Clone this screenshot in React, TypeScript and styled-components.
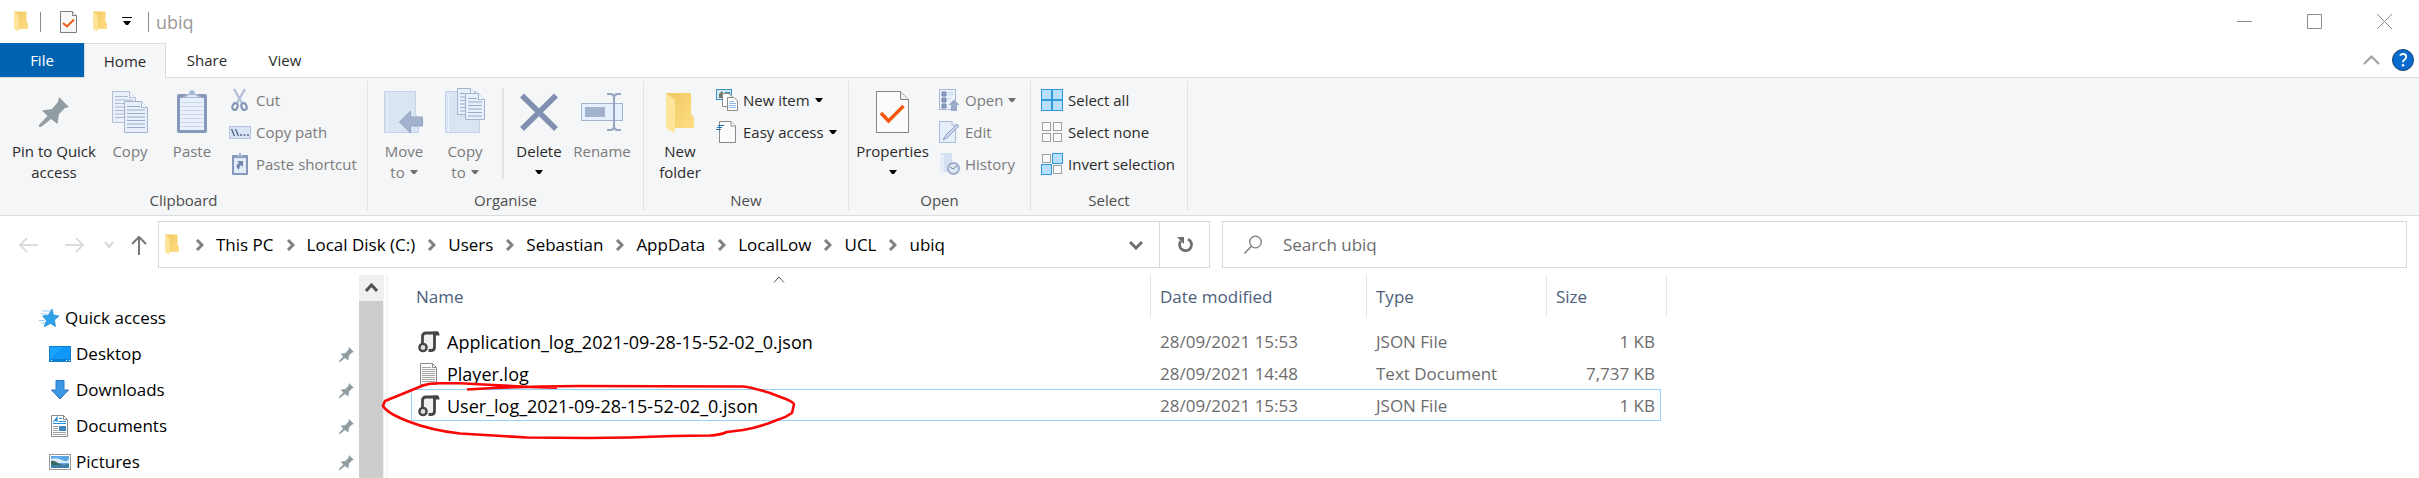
import React from "react";
import styled, { createGlobalStyle, css } from "styled-components";

const GlobalStyle = createGlobalStyle`
  *, *::before, *::after { box-sizing: border-box; }
  body {
    margin: 0;
    background: #fff;
    color: #000;
    font-family: "Open Sans", "Noto Sans", sans-serif;
    font-size: 17px;
    line-height: 24px;
  }
  button, input {
    font: inherit;
    color: inherit;
    background: none;
    border: 0;
    padding: 0;
    margin: 0;
  }
  svg { display: block; flex: none; }
`;

/* ---------- layout ---------- */

const Window = styled.div`
  display: flex;
  flex-direction: column;
  height: 100vh;
  overflow: hidden;
`;

const TitleBar = styled.header`
  display: flex;
  align-items: center;
  height: 43px;
  padding-left: 14px;
`;

const QuickTools = styled.div`
  display: flex;
  align-items: center;
  gap: 15px;
  margin: 0 16px 0 19px;
`;

const ToolButton = styled.button`
  display: flex;
  align-items: center;
  justify-content: center;
`;

const BarLine = styled.span<{ $gap?: number }>`
  width: 1px;
  height: 20px;
  margin-left: ${(p) => p.$gap ?? 0}px;
  background: #8c8c8c;
`;

const Title = styled.h1`
  margin: 0 0 0 7px;
  font-size: 18px;
  font-weight: 400;
  color: #999;
`;

const WindowControls = styled.div`
  display: flex;
  margin-left: auto;
`;

const ControlButton = styled.button`
  display: flex;
  align-items: center;
  justify-content: center;
  width: 70px;
  height: 42px;
`;

const TabBar = styled.nav`
  display: flex;
  height: 35px;
  font-size: 15px;
  border-bottom: 1px solid #dadbdc;
  color: #2b2b2b;
`;

const Tab = styled.button<{ $width: number; $kind?: "file" | "active" }>`
  width: ${(p) => p.$width}px;
  height: 34px;
  ${(p) =>
    p.$kind === "file" &&
    css`
      background: #0063b1;
      color: #fff;
    `}
  ${(p) =>
    p.$kind === "active" &&
    css`
      height: 35px;
      background: #f5f6f7;
      border: 1px solid #dadbdc;
      border-bottom: 0;
    `}
`;

const TabBarEnd = styled.div`
  display: flex;
  align-items: center;
  gap: 12px;
  margin-left: auto;
  padding-right: 5px;
`;

const Ribbon = styled.div`
  display: flex;
  flex: none;
  height: 138px;
  padding: 3px 0 4px;
  background: #f5f6f7;
  border-bottom: 1px solid #dadbdc;
  font-size: 15px;
  line-height: 21px;
`;

const Group = styled.section<{ $width: number }>`
  display: flex;
  flex-direction: column;
  min-width: ${(p) => p.$width}px;
  border-right: 1px solid #e2e3e4;
`;

const GroupBody = styled.div<{ $pad: number }>`
  display: flex;
  flex: 1;
  padding: 3px 0 0 ${(p) => p.$pad}px;
`;

const GroupLabel = styled.h2`
  margin: 0;
  text-align: center;
  font-size: 15px;
  font-weight: 400;
  color: #4d4d4d;
`;

const LargeButton = styled.button<{ $width: number }>`
  display: flex;
  flex-direction: column;
  align-items: center;
  width: ${(p) => p.$width}px;
  height: 100px;
  padding-top: 4px;
  color: #2b2b2b;
  &:disabled { color: #7b7b7b; }
  svg + span { margin-top: 7px; }
`;

const LabelLine = styled.span`
  display: flex;
  align-items: center;
  justify-content: center;
  gap: 5px;
  min-height: 21px;
  white-space: nowrap;
`;

const SmallColumn = styled.div<{ $gap: number }>`
  display: flex;
  flex-direction: column;
  align-items: flex-start;
  margin-left: ${(p) => p.$gap}px;
`;

const SmallButton = styled.button`
  display: flex;
  align-items: center;
  gap: 5px;
  height: 32px;
  color: #2b2b2b;
  white-space: nowrap;
  &:disabled { color: #7b7b7b; }
`;

const GroupDivider = styled.span`
  width: 2px;
  height: 91px;
  margin: 4px 4px 0 6px;
  background: #e1e2e4;
`;

const NavBar = styled.div`
  display: grid;
  grid-template-columns: 158px 1052fr 1197fr;
  flex: none;
  padding: 5px 12px 7px 0;
`;

const NavButtons = styled.div`
  display: flex;
  padding-left: 5px;
`;

const NavButton = styled.button<{ $width: number }>`
  display: flex;
  align-items: center;
  justify-content: center;
  width: ${(p) => p.$width}px;
  height: 47px;
`;

const AddressBar = styled.div`
  display: flex;
  align-items: center;
  height: 47px;
  padding-left: 6px;
  border: 1px solid #d9d9d9;
`;

const Crumbs = styled.ol`
  display: flex;
  flex: 1;
  margin: 0;
  padding: 0 0 0 4px;
  list-style: none;
`;

const Crumb = styled.li`
  display: flex;
  align-items: center;
  gap: 12px;
  margin-left: 12px;
  white-space: nowrap;
`;

const RefreshButton = styled(NavButton)`
  height: 45px;
  border-left: 1px solid #d9d9d9;
`;

const SearchBox = styled.label`
  display: flex;
  align-items: center;
  gap: 21px;
  margin-left: 12px;
  padding-left: 21px;
  border: 1px solid #d9d9d9;
`;

const SearchInput = styled.input`
  flex: 1;
  outline: 0;
  &::placeholder { color: #6d6d6d; opacity: 1; }
`;

const Content = styled.div`
  display: flex;
  flex: 1;
  min-height: 0;
`;

const Sidebar = styled.aside`
  width: 359px;
  padding: 25px 20px 0 38px;
  overflow: hidden;
`;

const SideLink = styled.a<{ $child?: boolean }>`
  display: flex;
  align-items: center;
  gap: 5px;
  height: 36px;
  padding-left: ${(p) => (p.$child ? 11 : 0)}px;
  color: #000;
  text-decoration: none;
  svg:last-child:not(:first-child) { margin-left: auto; margin-right: -15px; }
`;

const ScrollTrack = styled.div`
  display: flex;
  flex-direction: column;
  width: 25px;
  background: #f0f0f0;
`;

const ScrollUp = styled.button`
  display: flex;
  align-items: center;
  justify-content: center;
  height: 26px;
`;

const ScrollThumb = styled.div`
  flex: 1;
  width: 24px;
  background: #cdcdcd;
`;

const FilePane = styled.main`
  position: relative;
  flex: 1;
  margin-left: 2px;
  padding-left: 23px;
  border-left: 2px solid #f5f5f5;
`;

const FileTable = styled.table`
  width: 1256px;
  table-layout: fixed;
  border-collapse: separate;
  border-spacing: 0;
  tbody::before {
    content: "";
    display: block;
    height: 8px;
  }
`;

const HeadCell = styled.th`
  position: relative;
  height: 42px;
  padding: 2px 0 0 9px;
  border-right: 1px solid #e5e5e5;
  text-align: left;
  font-weight: 400;
  color: #4c607a;
  &:first-child { padding-left: 5px; }
`;

const SortMark = styled.span`
  position: absolute;
  top: 1px;
  left: 362px;
`;

const Cell = styled.td<{ $align?: "right" }>`
  height: 32px;
  padding: 2px 5px 0 9px;
  border: solid transparent;
  border-width: 1px 0;
  text-align: ${(p) => p.$align ?? "left"};
  color: #6d6d6d;
  white-space: nowrap;
  &:first-child {
    padding-left: 6px;
    border-left-width: 1px;
    color: #000;
    font-size: 18px;
  }
  &:last-child { border-right-width: 1px; }
`;

const Row = styled.tr<{ $focused?: boolean }>`
  ${(p) =>
    p.$focused &&
    css`
      ${Cell} { border-color: #99d1ff; }
    `}
`;

const FileName = styled.span`
  display: flex;
  align-items: center;
  gap: 7px;
`;

const Marker = styled.svg`
  position: absolute;
  left: -8px;
  top: 102px;
  pointer-events: none;
`;

/* ---------- icons ---------- */

const Folder = ({ w = 28, h = 42, flat = false }) => (
  <svg width={w} height={h} viewBox={flat ? "0 0 28 42" : "0 -4 28 46"} preserveAspectRatio="none">
    <defs>
      <linearGradient id="fold" x1="0" x2="1" y1="0" y2="1">
        <stop offset="0" stopColor="#f0c964" />
        <stop offset="1" stopColor="#ffdd82" />
      </linearGradient>
    </defs>
    <path d="M0 1H25V22L28 25V36H6Z" fill="url(#fold)" />
    <path d="M0 1L9 8V40L8 41L0 36Z" fill="#ffe59b" />
  </svg>
);

const Caret = ({ color = "#000" }) => (
  <svg width="8" height="5" viewBox="0 0 8 5">
    <path d="M0 0H8L5 4H3Z" fill={color} />
  </svg>
);

const PropSmall = () => (
  <svg width="18" height="22" viewBox="0 0 18 22">
    <path d="M.5 .5H12.5L16.5 4.5V21.5H.5Z" fill="#f7f7f7" stroke="#7d7d7d" />
    <path d="M12.5 .5V4.5H16.5" fill="#fff" stroke="#7d7d7d" />
    <path d="M3 12L7 15.5L14 8.5" fill="none" stroke="#f25a13" strokeWidth="2" />
  </svg>
);

const Customize = () => (
  <svg width="10" height="9" viewBox="0 0 10 9">
    <path d="M0 .5H10" stroke="#000" />
    <path d="M1 4H9L6 8H4Z" />
  </svg>
);

const Pin = ({ size = 30, h = size }) => (
  <svg width={size} height={h} viewBox={h === size ? "0 0 30 30" : "0 -9 30 46"}>
    <path d="M20 0L30 10L26 11L20 17L18.5 27L12 22L2 30H0V28L8.5 19L3 13.5L13 12L19 5Z" fill="#919ca3" />
  </svg>
);

const sheet = (x: number, y: number, w: number, h: number, lines = 7) => (
  <g transform={`translate(${x} ${y})`}>
    <path d={`M.5 .5H${w - 6.5}L${w - 0.5} 6.5V${h - 0.5}H.5Z`} fill="#e8effa" stroke="#a3b3cf" />
    <path d={`M${w - 6.5} .5V6.5H${w - 0.5}`} fill="#f6f9fd" stroke="#a3b3cf" />
    {Array.from({ length: lines }, (_, i) => (
      <path key={i} d={`M3 ${5.5 + i * 3.5}H${i === 0 ? w - 8 : w - 3}`} stroke="#9aabca" />
    ))}
  </g>
);

const CopyIcon = () => (
  <svg width="36" height="46" viewBox="0 0 36 46">
    <g opacity=".8">{sheet(0, 3, 24, 32)}</g>
    {sheet(12, 13, 24, 32)}
  </svg>
);

const PasteIcon = () => (
  <svg width="30" height="46" viewBox="0 0 30 46">
    <rect x="0" y="6" width="30" height="39" rx="2" fill="#8799bb" />
    <path d="M3 10H27V42H3Z" fill="#e8effa" />
    <path d="M4 14.5H26M4 18.5H26M4 22.5H26M4 26.5H26M4 30.5H26M4 34.5H26M4 38.5H26" stroke="#cbd8ec" />
    <path d="M5 10L10 6H12Q12 2 15 2Q18 2 18 6H20L25 10Z" fill="#aab9d3" />
    <path d="M9 9L12 7H18L21 9Z" fill="#dfe8f5" />
  </svg>
);

const CutIcon = () => (
  <svg width="22" height="24" viewBox="0 0 22 24" fill="none">
    <path d="M5 1L13 15M16 1L8 15" stroke="#b3c1da" strokeWidth="2.4" />
    <ellipse cx="6" cy="18.5" rx="2.5" ry="3.5" stroke="#8596b6" strokeWidth="2.2" transform="rotate(20 6 18.5)" />
    <ellipse cx="15" cy="18.5" rx="2.5" ry="3.5" stroke="#8596b6" strokeWidth="2.2" transform="rotate(-20 15 18.5)" />
  </svg>
);

const PathIcon = () => (
  <svg width="22" height="13" viewBox="0 0 22 13">
    <rect x=".5" y=".5" width="21" height="12" fill="#d9e4f5" stroke="#b4c3dd" />
    <path d="M2.5 3L5.5 10M6.5 3L9.5 10" stroke="#55688c" strokeWidth="1.4" />
    <path d="M11 9H13M14.500 9H16.500M18 9H20" stroke="#55688c" strokeWidth="1.6" />
  </svg>
);

const ShortcutIcon = () => (
  <svg width="22" height="24" viewBox="0 0 22 24">
    <rect x="3" y="3" width="16" height="20" rx="1" fill="#8799bb" />
    <path d="M5 6H17V21H5Z" fill="#e3ecf9" />
    <path d="M6 5L10 3V1H12V3L16 5Z" fill="#a3b3cf" />
    <path d="M8 9H14V15L12 13Q10 15 10 18Q5 14 10 11Z" fill="#7387ac" />
  </svg>
);

const book = (x: number, y: number, w: number, h: number) => (
  <g>
    <path d={`M${x + 0.5} ${y + 0.5}h${w - 3}v${h * 0.55}l3 4v${h * 0.45 - 5}h${-w}Z`} fill="#dae5f4" stroke="#c3d2e8" />
    <path d={`M${x + 3.5} ${y + 3}v${h - 4}`} stroke="#edf3fb" />
  </g>
);

const MoveIcon = () => (
  <svg width="40" height="46" viewBox="0 0 40 46">
    {book(0, 3, 34, 42)}
    <path d="M15.5 34L26.5 23V29H38.5V38H26.5V45Z" fill="#a2b1cc" stroke="#93a4c2" />
  </svg>
);

const CopyToIcon = () => (
  <svg width="40" height="46" viewBox="0 0 40 46">
    {book(0, 3, 34, 42)}
    {sheet(12, 0, 20, 27, 6)}
    {sheet(20, 5, 20, 27, 6)}
  </svg>
);

const DeleteIcon = () => (
  <svg width="38" height="46" viewBox="0 0 38 46">
    <path d="M2 7.5L36 41M36 7.5L2 41" stroke="#8090b0" strokeWidth="5.5" />
  </svg>
);

const RenameIcon = () => (
  <svg width="42" height="46" viewBox="0 0 42 46">
    <rect x=".5" y="15.5" width="41" height="17" fill="#e6effc" stroke="#a3b3cf" />
    <rect x="4" y="19" width="20" height="10" fill="#a2b1cc" />
    <path d="M26 6H29Q33 6 33 10V38Q33 42 29 42H26M40 6H37Q33 6 33 10M33 38Q33 42 37 42H40" fill="none" stroke="#95a5c2" strokeWidth="2" />
  </svg>
);

const NewItemIcon = () => (
  <svg width="22" height="24" viewBox="0 0 22 24">
    <rect x=".5" y="1.5" width="15" height="10" fill="#cdebfa" stroke="#3f8fc0" />
    <path d="M3 10V6L6 3L8 6V10Z" fill="#6f7d66" />
    <path d="M9 4H14V6H9Z" fill="#3b8fa8" />
    <path d="M6.5 5.5H13L16 8.5V18.5H6.5Z" fill="#fff" stroke="#8a8a8a" />
    <path d="M11.5 9.5H18L21.5 13V22.5H11.5Z" fill="#fff" stroke="#8a8a8a" />
    <path d="M13 13.5H18M13 15.5H20M13 17.5H20M13 19.5H20" stroke="#8ec0ea" />
  </svg>
);

const EasyIcon = () => (
  <svg width="22" height="24" viewBox="0 0 22 24">
    <path d="M3.5 1.5H15L19.5 6V22.5H3.5Z" fill="#fbfbfb" stroke="#8a8a8a" />
    <path d="M15 1.5V6H19.5" fill="#fff" stroke="#8a8a8a" />
    <path d="M2 5.5H8M1 7.5H6M0 9.5H5" stroke="#1d6fae" strokeWidth="1.2" />
  </svg>
);

const PropIcon = () => (
  <svg width="33" height="46" viewBox="0 0 33 46">
    <path d="M.5 3.5H24.5L32.5 11.5V44.5H.5Z" fill="#fbfbfb" stroke="#858585" />
    <path d="M24.5 3.5V11.5H32.5" fill="#eee" stroke="#858585" />
    <path d="M5 25L12.5 33L27.5 18" fill="none" stroke="#f5580c" strokeWidth="3.5" />
  </svg>
);

const OpenIcon = () => (
  <svg width="22" height="24" viewBox="0 0 22 24">
    <rect x="1.5" y="1.5" width="16" height="20" fill="#eaf1fb" stroke="#a9b9d5" />
    <path d="M4 4H8V8H4ZM4 10H8V14H4ZM4 16H8V20H4Z" fill="#8ea0c2" stroke="#7286ab" />
    <path d="M10 4.5H15M10 6.5H15M10 10.5H13" stroke="#c8d6eb" />
    <path d="M10.5 17L16 11.5L21.5 17H19V23H13V17Z" fill="#9aaac8" />
  </svg>
);

const EditIcon = () => (
  <svg width="22" height="24" viewBox="0 0 22 24">
    <path d="M1.5 1.5H14L17.5 5V22.5H1.5Z" fill="#e6eefa" stroke="#a9b9d5" />
    <path d="M14 1.5V5H17.5" fill="#fff" stroke="#a9b9d5" />
    <path d="M5 20L7 16L19 4L21 6L9 18Z" fill="#c6d3e8" stroke="#94a6c6" />
  </svg>
);

const HistoryIcon = () => (
  <svg width="22" height="24" viewBox="0 0 22 24">
    <path d="M2 1H14V20H4Z" fill="#d5e1f2" />
    <path d="M2 1L6 4V23L2 20Z" fill="#e7eefa" />
    <circle cx="15.5" cy="16.5" r="5.5" fill="#dfe7f3" stroke="#9aaaca" strokeWidth="1.8" />
    <path d="M12 15L15 17L19 14" fill="none" stroke="#7286ab" />
  </svg>
);

const SelectIcon = ({ on }: { on: boolean[] }) => (
  <svg width="22" height="22" viewBox="0 0 22 22">
    {on.map((v, i) => (
      <rect
        key={i}
        x={(i % 2) * 11 + (v ? 0.5 : 1.5)}
        y={Math.floor(i / 2) * 11 + (v ? 0.5 : 1.5)}
        width={v ? 10 : 8}
        height={v ? 10 : 8}
        fill={v ? "#b5e0fd" : "#fafafa"}
        stroke={v ? "#2f97e0" : "#a0a0a0"}
      />
    ))}
  </svg>
);

const Stroke = ({ w, h, d, color, sw = 1 }: { w: number; h: number; d: string; color: string; sw?: number }) => (
  <svg width={w} height={h} viewBox={`0 0 ${w} ${h}`}>
    <path d={d} fill="none" stroke={color} strokeWidth={sw} />
  </svg>
);

const HelpIcon = () => (
  <svg width="22" height="22" viewBox="0 0 22 22">
    <circle cx="11" cy="11" r="10.5" fill="#0a6bce" stroke="#13416e" />
    <path d="M7.8 6.5Q9 5 11.2 5Q14.2 5 14.2 7.8Q14.2 9.6 12.4 10.8Q11 11.7 11 13.2" fill="none" stroke="#fff" strokeWidth="1.8" />
    <circle cx="11" cy="16.3" r="1.2" fill="#fff" />
  </svg>
);

const RefreshIcon = () => (
  <svg width="18" height="18" viewBox="0 0 18 18">
    <path d="M12 3.2A6 6 0 1 1 4.8 5" fill="none" stroke="#6f6f6f" strokeWidth="2.8" />
    <path d="M1 1H8V8Z" fill="#6f6f6f" />
  </svg>
);

const SearchIcon = () => (
  <svg width="18" height="20" viewBox="0 0 18 20">
    <circle cx="11.5" cy="7" r="5.8" fill="none" stroke="#7a7a7a" strokeWidth="1.3" />
    <path d="M7.5 11L.5 18.5" stroke="#7a7a7a" strokeWidth="1.4" />
  </svg>
);

const StarIcon = () => (
  <svg width="22" height="18" viewBox="0 0 22 18">
    <path d="M14 0L15.500 6L21 7L16.500 11L17.500 17.500L12.500 14.500L6 18L8.500 11.500L4.500 7L10.500 6Z" fill="#2da0ea" stroke="#1b7fc6" strokeWidth=".6" />
    <path d="M4 2H12M3 5H9M1 11.500H7M3 14H7" stroke="#8fcdf5" />
  </svg>
);

const DesktopIcon = () => (
  <svg width="22" height="16" viewBox="0 0 22 16">
    <rect width="22" height="16" fill="#0d7fd0" />
    <path d="M1 1H21V13H1Z" fill="#1ba4ff" />
    <path d="M1 13L14 1H21V13Z" fill="#0f97fa" />
    <path d="M2 14.5H3M17 14.5H18M20 14.5H21" stroke="#fff" />
  </svg>
);

const DownloadIcon = () => (
  <svg width="22" height="20" viewBox="0 0 22 20">
    <path d="M7 .5H15V10H19.5L11 19L2.5 10H7Z" fill="#3c97e6" stroke="#2a78c4" />
  </svg>
);

const DocumentIcon = () => (
  <svg width="22" height="22" viewBox="0 0 22 22">
    <path d="M2.5 .5H14.5L18.5 4.5V21.5H2.5Z" fill="#fff" stroke="#8a8a8a" />
    <path d="M14.5 .5V4.5H18.5" fill="none" stroke="#8a8a8a" />
    <path d="M4.500 7L8 2.500V7M6 5.500H8M10 3.500H13M10 6.500H17" fill="none" stroke="#2492dd" strokeWidth="1.2" />
    <path d="M4 8.500H17" stroke="#2492dd" />
    <path d="M4 11.5H9M4 13.500H9M4 15.5H9M4 17.500H17M4 19.500H17" stroke="#a0a0a0" />
    <path d="M10 11H17V16H10Z" fill="#3f86bf" />
  </svg>
);

const PictureIcon = () => (
  <svg width="22" height="16" viewBox="0 0 22 16">
    <rect x=".5" y=".5" width="21" height="15" fill="#fff" stroke="#979797" />
    <path d="M2 2H20V14H2Z" fill="#5ea6e6" />
    <path d="M2 5Q8 3 13 6T20 5V9H2Z" fill="#d9ecf8" />
    <path d="M2 7Q5 6 9 9T20 10V12H2Z" fill="#3d6b5c" />
    <path d="M2 11H20V14H2Z" fill="#3e7eac" />
  </svg>
);

const JsonIcon = () => (
  <svg width="22" height="22" viewBox="0 0 22 22">
    <path d="M5 5Q5 2 8 2H17V17Q17 20 13 20H9V14L6 11Z" fill="#f0f0f3" />
    <path d="M4.500 12V5Q4.500 2 8 2H20M16.500 2V16Q16.500 19.500 13.500 19.500H10.500" fill="none" stroke="#454545" strokeWidth="2.8" />
    <path d="M15 .600H19Q21.500 .600 21.500 4.500H15Z" fill="#454545" />
    <circle cx="5" cy="16.5" r="3.6" fill="#ddd" stroke="#454545" strokeWidth="2.4" />
  </svg>
);

const TextIcon = () => (
  <svg width="22" height="22" viewBox="0 0 22 22">
    <path d="M2.5 .5H14.5L18.5 4.5V21.5H2.5Z" fill="#fbfbfb" stroke="#8a8a8a" />
    <path d="M14.5 .5V4.5H18.5" fill="none" stroke="#8a8a8a" />
    <path d="M4 4.5H13M4 6.5H17M4 8.5H17M4 10.5H17M4 12.5H17M4 14.5H17M4 16.5H17M4 18.5H17" stroke="#a5a5a5" />
  </svg>
);

/* ---------- data ---------- */

const crumbs = ["This PC", "Local Disk (C:)", "Users", "Sebastian", "AppData", "LocalLow", "UCL", "ubiq"];

const places = [
  { name: "Desktop", icon: <DesktopIcon /> },
  { name: "Downloads", icon: <DownloadIcon /> },
  { name: "Documents", icon: <DocumentIcon /> },
  { name: "Pictures", icon: <PictureIcon /> },
];

const files = [
  { name: "Application_log_2021-09-28-15-52-02_0.json", date: "28/09/2021 15:53", type: "JSON File", size: "1 KB", icon: <JsonIcon /> },
  { name: "Player.log", date: "28/09/2021 14:48", type: "Text Document", size: "7,737 KB", icon: <TextIcon /> },
  { name: "User_log_2021-09-28-15-52-02_0.json", date: "28/09/2021 15:53", type: "JSON File", size: "1 KB", icon: <JsonIcon />, focused: true },
];

export default function App() {
  return (
    <Window>
      <GlobalStyle />
      <TitleBar>
        <Folder w={14} h={21} flat />
        <BarLine $gap={12} />
        <QuickTools>
          <ToolButton aria-label="Properties"><PropSmall /></ToolButton>
          <ToolButton aria-label="New folder"><Folder w={14} h={21} flat /></ToolButton>
          <ToolButton aria-label="Customize toolbar"><Customize /></ToolButton>
        </QuickTools>
        <BarLine />
        <Title>ubiq</Title>
        <WindowControls>
          <ControlButton aria-label="Minimise"><Stroke w={15} h={15} d="M0 7.5H15" color="#8c8c8c" /></ControlButton>
          <ControlButton aria-label="Maximise"><Stroke w={15} h={15} d="M.5 .5H14.5V14.5H.5Z" color="#8c8c8c" /></ControlButton>
          <ControlButton aria-label="Close"><Stroke w={15} h={15} d="M0 0L15 15M15 0L0 15" color="#8c8c8c" /></ControlButton>
        </WindowControls>
      </TitleBar>

      <TabBar>
        <Tab $width={84} $kind="file">File</Tab>
        <Tab $width={82} $kind="active">Home</Tab>
        <Tab $width={82}>Share</Tab>
        <Tab $width={74}>View</Tab>
        <TabBarEnd>
          <ToolButton aria-label="Collapse ribbon"><Stroke w={17} h={10} d="M1 9L8.5 1.5L16 9" color="#a0a0a0" sw={2} /></ToolButton>
          <ToolButton aria-label="Help"><HelpIcon /></ToolButton>
        </TabBarEnd>
      </TabBar>

      <Ribbon>
        <Group $width={368}>
          <GroupBody $pad={8}>
            <LargeButton $width={92}>
              <Pin size={30} h={46} />
              <LabelLine>Pin to Quick</LabelLine>
              <LabelLine>access</LabelLine>
            </LargeButton>
            <LargeButton $width={60} disabled><CopyIcon /><LabelLine>Copy</LabelLine></LargeButton>
            <LargeButton $width={64} disabled><PasteIcon /><LabelLine>Paste</LabelLine></LargeButton>
            <SmallColumn $gap={5}>
              <SmallButton disabled><CutIcon />Cut</SmallButton>
              <SmallButton disabled><PathIcon />Copy path</SmallButton>
              <SmallButton disabled><ShortcutIcon />Paste shortcut</SmallButton>
            </SmallColumn>
          </GroupBody>
          <GroupLabel>Clipboard</GroupLabel>
        </Group>

        <Group $width={276}>
          <GroupBody $pad={6}>
            <LargeButton $width={60} disabled>
              <MoveIcon />
              <LabelLine>Move</LabelLine>
              <LabelLine>to <Caret color="#6f6f6f" /></LabelLine>
            </LargeButton>
            <LargeButton $width={62} disabled>
              <CopyToIcon />
              <LabelLine>Copy</LabelLine>
              <LabelLine>to <Caret color="#6f6f6f" /></LabelLine>
            </LargeButton>
            <GroupDivider />
            <LargeButton $width={62}>
              <DeleteIcon />
              <LabelLine>Delete</LabelLine>
              <LabelLine><Caret /></LabelLine>
            </LargeButton>
            <LargeButton $width={64} disabled><RenameIcon /><LabelLine>Rename</LabelLine></LargeButton>
          </GroupBody>
          <GroupLabel>Organise</GroupLabel>
        </Group>

        <Group $width={205}>
          <GroupBody $pad={6}>
            <LargeButton $width={60}>
              <Folder w={28} h={46} />
              <LabelLine>New</LabelLine>
              <LabelLine>folder</LabelLine>
            </LargeButton>
            <SmallColumn $gap={6}>
              <SmallButton><NewItemIcon />New item <Caret /></SmallButton>
              <SmallButton><EasyIcon />Easy access <Caret /></SmallButton>
            </SmallColumn>
          </GroupBody>
          <GroupLabel>New</GroupLabel>
        </Group>

        <Group $width={182}>
          <GroupBody $pad={6}>
            <LargeButton $width={75}>
              <PropIcon />
              <LabelLine>Properties</LabelLine>
              <LabelLine><Caret /></LabelLine>
            </LargeButton>
            <SmallColumn $gap={8}>
              <SmallButton disabled><OpenIcon />Open <Caret color="#6f6f6f" /></SmallButton>
              <SmallButton disabled><EditIcon />Edit</SmallButton>
              <SmallButton disabled><HistoryIcon />History</SmallButton>
            </SmallColumn>
          </GroupBody>
          <GroupLabel>Open</GroupLabel>
        </Group>

        <Group $width={157}>
          <GroupBody $pad={10}>
            <SmallColumn $gap={0}>
              <SmallButton><SelectIcon on={[true, true, true, true]} />Select all</SmallButton>
              <SmallButton><SelectIcon on={[false, false, false, false]} />Select none</SmallButton>
              <SmallButton><SelectIcon on={[false, true, true, false]} />Invert selection</SmallButton>
            </SmallColumn>
          </GroupBody>
          <GroupLabel>Select</GroupLabel>
        </Group>
      </Ribbon>

      <NavBar>
        <NavButtons>
          <NavButton $width={46} aria-label="Back"><Stroke w={20} h={16} d="M20 8H2M9 1L2 8L9 15" color="#dcdcdc" sw={2} /></NavButton>
          <NavButton $width={47} aria-label="Forward"><Stroke w={20} h={16} d="M0 8H18M11 1L18 8L11 15" color="#dcdcdc" sw={2} /></NavButton>
          <NavButton $width={21} aria-label="Recent locations"><Stroke w={10} h={8} d="M1 1L5 6L9 1" color="#d4d4d4" sw={2} /></NavButton>
          <NavButton $width={39} aria-label="Up"><Stroke w={16} h={20} d="M8 20V2M1 9L8 2L15 9" color="#777" sw={2} /></NavButton>
        </NavButtons>
        <AddressBar>
          <Folder w={14} h={21} flat />
          <Crumbs>
            {crumbs.map((name) => (
              <Crumb key={name}>
                <Stroke w={9} h={12} d="M2 1L7 6L2 11" color="#808080" sw={3} />
                <button>{name}</button>
              </Crumb>
            ))}
          </Crumbs>
          <NavButton $width={46} aria-label="Previous locations"><Stroke w={14} h={10} d="M1 2L7 8L13 2" color="#6f6f6f" sw={3} /></NavButton>
          <RefreshButton $width={50} aria-label="Refresh"><RefreshIcon /></RefreshButton>
        </AddressBar>
        <SearchBox>
          <SearchIcon />
          <SearchInput type="text" placeholder="Search ubiq" aria-label="Search ubiq" />
        </SearchBox>
      </NavBar>

      <Content>
        <Sidebar>
          <SideLink href="#quick"><StarIcon />Quick access</SideLink>
          {places.map((p) => (
            <SideLink key={p.name} href={`#${p.name}`} $child>
              {p.icon}
              {p.name}
              <Pin size={15} />
            </SideLink>
          ))}
        </Sidebar>
        <ScrollTrack>
          <ScrollUp aria-label="Scroll up"><Stroke w={13} h={10} d="M1 8L6.5 2L12 8" color="#505050" sw={3} /></ScrollUp>
          <ScrollThumb />
        </ScrollTrack>
        <FilePane>
          <FileTable>
            <colgroup>
              <col width="740" />
              <col width="216" />
              <col width="180" />
              <col width="114" />
              <col width="6" />
            </colgroup>
            <thead>
              <tr>
                <HeadCell>
                  Name
                  <SortMark><Stroke w={12} h={7} d="M1 6.5L6 1L11 6.5" color="#555" /></SortMark>
                </HeadCell>
                <HeadCell>Date modified</HeadCell>
                <HeadCell>Type</HeadCell>
                <HeadCell colSpan={2}>Size</HeadCell>
              </tr>
            </thead>
            <tbody>
              {files.map((f) => (
                <Row key={f.name} $focused={f.focused}>
                  <Cell><FileName>{f.icon}{f.name}</FileName></Cell>
                  <Cell>{f.date}</Cell>
                  <Cell>{f.type}</Cell>
                  <Cell $align="right">{f.size}</Cell>
                </Row>
              ))}
            </tbody>
          </FileTable>
          <Marker width="420" height="70" viewBox="380 377 420 70">
            <path
              d="M467 389.5L493 388Q530 386.5 580 386L743 386.5Q752 387.5 770 393L787 399.5Q794 402.5 794 404.5L792 413Q785 418 777 420L768 423.5Q755 428 743 430L727 432Q720 435 710 435.5L673 436Q630 438 587 438L527 437.5L460 433.5Q430 430 410 422Q388 414 383 406L385 401L423 385.5Q430 383 440 383.2H460L493 385L530 387L557 387.7"
              fill="none"
              stroke="#fb0505"
              strokeWidth="2.6"
              strokeLinejoin="round"
            />
          </Marker>
        </FilePane>
      </Content>
    </Window>
  );
}
